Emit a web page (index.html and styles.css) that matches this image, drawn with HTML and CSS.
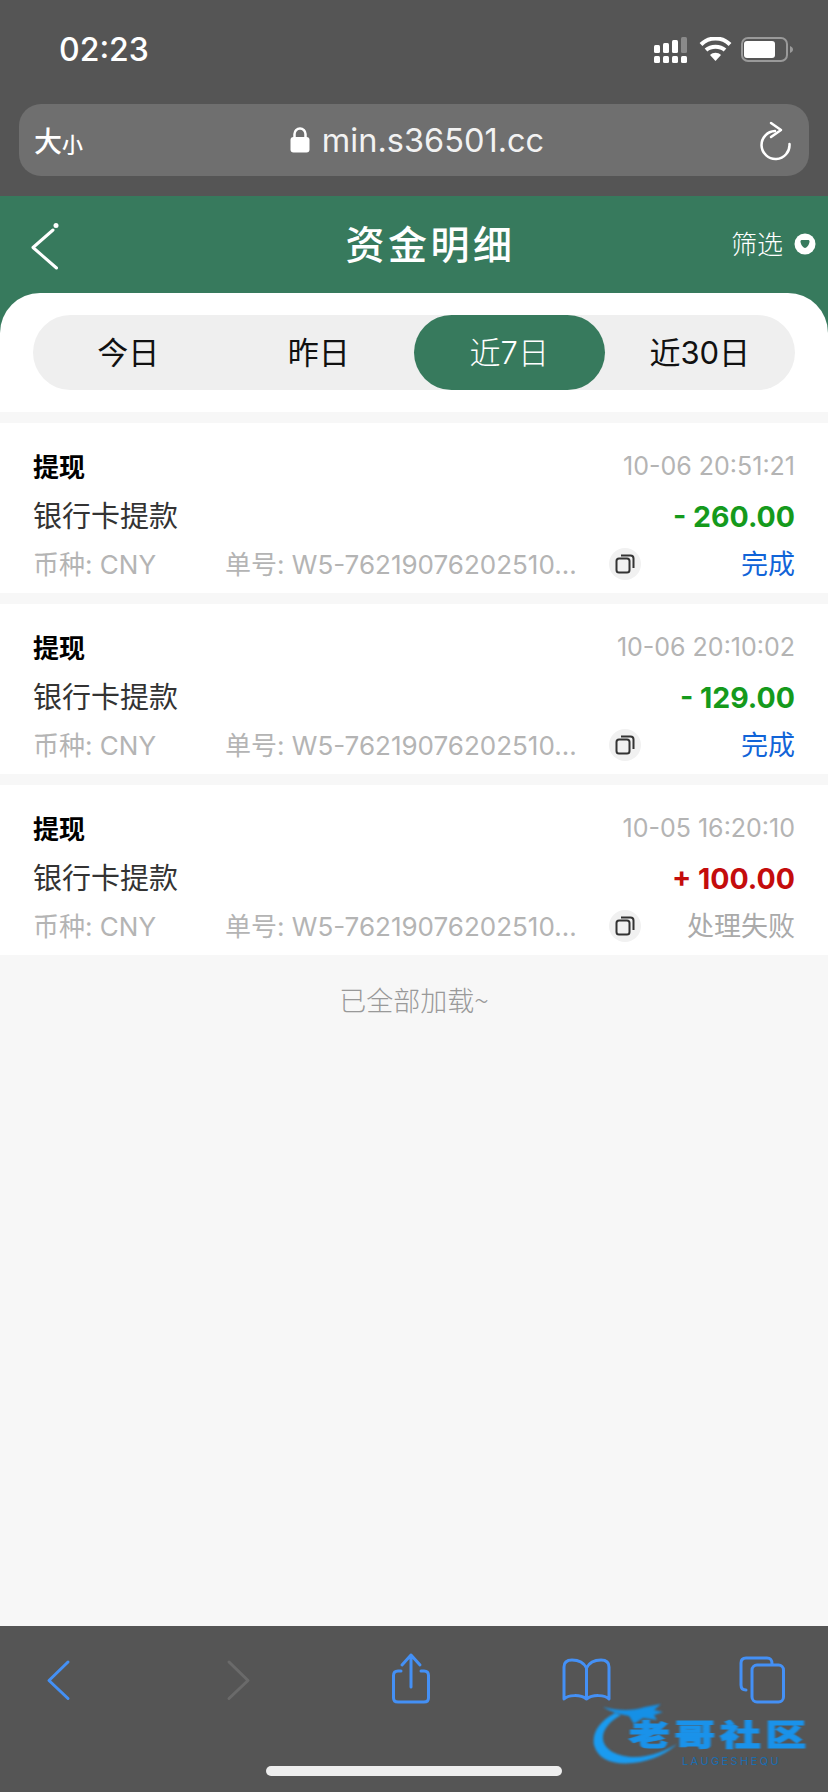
FILE: index.html
```html
<!DOCTYPE html>
<html lang="zh-CN">
<head>
    <meta charset="UTF-8">
    <meta name="viewport" content="width=device-width, initial-scale=1.0">
    <title>资金明细</title>
    <link rel="stylesheet" href="styles.css">
</head>
<body>
    <div class="browser-top">
        <div class="status-bar">
            <span class="clock">02:23</span>
            <svg class="status-icons" width="140" height="26" viewBox="0 0 140 26">
                <!-- signal -->
                <g fill="#fff">
                    <rect x="0" y="8" width="6" height="8" rx="1.5"/>
                    <rect x="9" y="6" width="6" height="10" rx="1.5"/>
                    <rect x="18" y="3" width="6" height="13" rx="1.5"/>
                    <rect x="27" y="0" width="6" height="16" rx="1.5" fill="#8a8a8a"/>
                    <rect x="0" y="19" width="6" height="7" rx="1.5"/>
                    <rect x="9" y="19" width="6" height="7" rx="1.5"/>
                    <rect x="18" y="19" width="6" height="7" rx="1.5"/>
                    <rect x="27" y="19" width="6" height="7" rx="1.5"/>
                </g>
                <!-- wifi -->
                <g fill="none" stroke="#fff" stroke-width="4">
                    <path d="M47 7.500C55 -0.500 68 -0.500 76 7.500"/>
                    <path d="M52 13C57 8.500 66 8.500 71 13"/>
                </g>
                <path d="M56 18C59 15 64 15 67 18L61.500 24Z" fill="#fff"/>
                <!-- battery -->
                <rect x="88" y="1" width="45" height="23" rx="6" fill="none" stroke="#9a9a9a" stroke-width="2"/>
                <rect x="90" y="4" width="31" height="17" rx="3" fill="#fff"/>
                <path d="M136 9C138 10 139 11 139 12.500C139 14 138 15 136 16Z" fill="#9a9a9a"/>
            </svg>
        </div>
        <div class="url-bar">
            <span class="font-size"><span class="big">大</span><span class="small">小</span></span>
            <span class="address">
                <svg width="20" height="26" viewBox="0 0 20 26">
                    <path d="M4.500 11V7a5.500 5.500 0 0 1 11 0v4" fill="none" stroke="#fff" stroke-width="2.500"/>
                    <rect x="0.500" y="10" width="19" height="15.500" rx="3" fill="#fff"/>
                </svg>
                min.s36501.cc
            </span>
            <svg class="reload" width="36" height="42" viewBox="0 0 36 42">
                <path d="M17 11A14 14 0 1 0 31.500 24" fill="none" stroke="#fff" stroke-width="2.500" stroke-linecap="round"/>
                <path d="M13 3L23 10L13 17" fill="none" stroke="#fff" stroke-width="2.500" stroke-linecap="round" stroke-linejoin="round"/>
            </svg>
        </div>
    </div>

    <div class="page-header">
        <svg class="back" width="40" height="50" viewBox="0 0 40 50">
            <path d="M24 9L4 26.500L27.500 47" fill="none" stroke="#fff" stroke-width="3" stroke-linecap="round" stroke-linejoin="round"/>
            <circle cx="27" cy="4.500" r="2.500" fill="#fff"/>
        </svg>
        <h1 class="page-title">资金明细</h1>
        <div class="filter">
            <span>筛选</span>
            <svg width="22" height="22" viewBox="0 0 22 22">
                <circle cx="11" cy="11" r="10.500" fill="#fff"/>
                <path d="M6.500 8.500C6.500 7.500 7 7 8 7H14C15 7 15.500 7.500 15.500 8.500C15.500 11 13 15 11 15C9 15 6.500 11 6.500 8.500Z" fill="#377a5d"/>
            </svg>
        </div>
    </div>

    <div class="tabs-wrap">
        <div class="tabs">
            <div class="tab">今日</div>
            <div class="tab">昨日</div>
            <div class="tab active">近7日</div>
            <div class="tab">近30日</div>
        </div>
    </div>

    <div class="content">
        <div class="record">
            <div class="line">
                <span class="type">提现</span>
                <span class="time">10-06 20:51:21</span>
            </div>
            <div class="line">
                <span class="method">银行卡提款</span>
                <span class="amount minus">- 260.00</span>
            </div>
            <div class="line meta">
                <span class="currency">币种: CNY</span>
                <span class="order">单号: W5-76219076202510...</span>
                <span class="copy">
                    <svg width="20" height="20" viewBox="0 0 20 20">
                        <rect x="1.500" y="4.500" width="13" height="14" rx="2.500" fill="none" stroke="#333" stroke-width="2"/>
                        <path d="M6 1.500H15.500C17.500 1.500 18.500 2.500 18.500 4.500V14" fill="none" stroke="#333" stroke-width="2"/>
                    </svg>
                </span>
                <span class="state done">完成</span>
            </div>
        </div>

        <div class="record">
            <div class="line">
                <span class="type">提现</span>
                <span class="time">10-06 20:10:02</span>
            </div>
            <div class="line">
                <span class="method">银行卡提款</span>
                <span class="amount minus">- 129.00</span>
            </div>
            <div class="line meta">
                <span class="currency">币种: CNY</span>
                <span class="order">单号: W5-76219076202510...</span>
                <span class="copy">
                    <svg width="20" height="20" viewBox="0 0 20 20">
                        <rect x="1.500" y="4.500" width="13" height="14" rx="2.500" fill="none" stroke="#333" stroke-width="2"/>
                        <path d="M6 1.500H15.500C17.500 1.500 18.500 2.500 18.500 4.500V14" fill="none" stroke="#333" stroke-width="2"/>
                    </svg>
                </span>
                <span class="state done">完成</span>
            </div>
        </div>

        <div class="record">
            <div class="line">
                <span class="type">提现</span>
                <span class="time">10-05 16:20:10</span>
            </div>
            <div class="line">
                <span class="method">银行卡提款</span>
                <span class="amount plus">+ 100.00</span>
            </div>
            <div class="line meta">
                <span class="currency">币种: CNY</span>
                <span class="order">单号: W5-76219076202510...</span>
                <span class="copy">
                    <svg width="20" height="20" viewBox="0 0 20 20">
                        <rect x="1.500" y="4.500" width="13" height="14" rx="2.500" fill="none" stroke="#333" stroke-width="2"/>
                        <path d="M6 1.500H15.500C17.500 1.500 18.500 2.500 18.500 4.500V14" fill="none" stroke="#333" stroke-width="2"/>
                    </svg>
                </span>
                <span class="state">处理失败</span>
            </div>
        </div>

        <div class="loaded">已全部加载~</div>
    </div>

    <div class="browser-bottom">
        <div class="toolbar">
            <svg width="60" height="60" viewBox="0 0 60 60" fill="none" stroke="#4490f5" stroke-width="3" stroke-linecap="round" stroke-linejoin="round">
                <path d="M39 11L20 29.500 39 47.500"/>
            </svg>
            <svg width="60" height="60" viewBox="0 0 60 60" fill="none" stroke="#6a6a6a" stroke-width="3" stroke-linecap="round" stroke-linejoin="round">
                <path d="M24 11L43 29.500 24 47.500"/>
            </svg>
            <svg width="60" height="60" viewBox="0 0 60 60" fill="none" stroke="#4490f5" stroke-width="3" stroke-linecap="round" stroke-linejoin="round">
                <path d="M20 20H17C14 20 12.500 21.500 12.500 24.500V47C12.500 50 14 51 17 51H43C46 51 47.500 50 47.500 47V24.500C47.500 21.500 46 20 43 20H40"/>
                <path d="M30 36V4M21 14L30 4L39 14"/>
            </svg>
            <svg width="60" height="60" viewBox="0 0 60 60" fill="none" stroke="#4490f5" stroke-width="3" stroke-linecap="round" stroke-linejoin="round">
                <path d="M30.500 17C27 10 20 9 16 9C11 9 8 11 8 16V48C12 44 24 43 30.500 48C37 43 49 44 53 48V16C53 11 50 9 45 9C41 9 34 10 30.500 17ZM30.500 17V48"/>
            </svg>
            <svg width="60" height="60" viewBox="0 0 60 60" fill="none" stroke="#4490f5" stroke-width="3" stroke-linecap="round" stroke-linejoin="round">
                <path d="M14 39C10 39 9 37 9 34V12C9 8 11 7 14 7H35C39 7 40 9 40 13"/>
                <rect x="20" y="14" width="31.500" height="37" rx="5"/>
            </svg>
        </div>
        <div class="home-bar"></div>
        <!-- watermark -->
        <div class="watermark">
            <svg class="dragon" width="100" height="70" viewBox="0 0 100 70">
                <path d="M26 11C9 20 3 32 5 43C9 58 24 63 44 61C64 59 80 50 88 42C78 48 62 55 46 55C29 55 15 48 14 37C13 28 21 19 32 13Z" fill="#1a9bf0"/>
                <path d="M14 5C30 9 44 9 56 5L72 2L65 8L74 10L65 13L68 18L54 16L45 22L40 14C30 12 22 10 14 5Z" fill="#1590e6"/>
            </svg>
            <div class="wm-name">老哥社区</div>
            <div class="wm-sub">LAUGESHEQU</div>
        </div>
    </div>
</body>
</html>
```

FILE: styles.css
```css
* {
    box-sizing: border-box;
}
html, body {
    margin: 0;
    height: 100%;
}
body {
    width: 828px;
    height: 1792px;
    overflow: hidden;
    display: flex;
    flex-direction: column;
    font-family: Inter, "Noto Sans CJK SC", sans-serif;
    background-color: #f7f7f7;
}

/* safari top */
.browser-top {
    height: 196px;
    padding: 0 19px;
    background-color: #555;
    color: white;
}
.status-bar {
    height: 104px;
    padding: 35px 15px 0 40px;
    display: flex;
    justify-content: space-between;
    align-items: flex-start;
}
.clock {
    font-size: 32px;
    line-height: 30px;
    font-weight: 500;
}
.status-icons {
    margin-top: 2px;
}
.url-bar {
    height: 72px;
    padding: 0 15px 0 15px;
    display: flex;
    align-items: center;
    justify-content: space-between;
    border-radius: 22px;
    background-color: #6f6f6f;
}
.font-size {
    width: 120px;
    font-family: "Noto Sans CJK SC", sans-serif;
    font-weight: 500;
    line-height: 1;
}
.big {
    font-size: 28px;
}
.small {
    font-size: 21px;
}
.address {
    display: flex;
    align-items: center;
    gap: 12px;
    font-size: 32.500px;
    color: #f2f2f2;
}
.reload {
    margin-left: 78px;
    margin-top: 2px;
}

/* green header */
.page-header {
    height: 137px;
    padding: 0 12px 40px 29px;
    display: grid;
    grid-template-columns: 200px 1fr 200px;
    align-items: center;
    background-color: #377a5d;
    color: white;
}
.back {
    margin-top: 3px;
}
.page-title {
    margin: -6px 0 0 16px;
    text-align: center;
    font-family: "Noto Sans CJK SC", sans-serif;
    font-size: 39px;
    font-weight: 500;
    letter-spacing: 3.500px;
}
.filter {
    display: flex;
    justify-content: flex-end;
    align-items: center;
    gap: 11px;
    font-family: "Noto Sans CJK SC", sans-serif;
    font-size: 26px;
    font-weight: 300;
    margin-top: -4px;
}
.filter svg {
    margin-top: 2px;
}

/* tabs */
.tabs-wrap {
    margin-top: -40px;
    padding: 22px 33px;
    background-color: white;
    border-radius: 40px 40px 0 0;
}
.tabs {
    height: 75px;
    display: flex;
    border-radius: 38px;
    background-color: #efefef;
}
.tab {
    flex: 1;
    display: flex;
    align-items: center;
    justify-content: center;
    padding-bottom: 5px;
    border-radius: 38px;
    font-family: Inter, "Noto Sans CJK SC", sans-serif;
    font-size: 31px;
    color: #111;
}
.tab.active {
    background-color: #377a5d;
    color: white;
    font-weight: 300;
}

/* list */
.content {
    flex: 1;
    padding-top: 11px;
}
.record {
    height: 170px;
    margin-bottom: 11px;
    padding: 21px 33px 5px;
    background-color: white;
}
.record:last-of-type {
    margin-bottom: 0;
}
.line {
    height: 48px;
    display: flex;
    align-items: center;
    justify-content: space-between;
}
.type {
    margin-bottom: 5px;
    font-family: "Noto Sans CJK SC", sans-serif;
    font-size: 26px;
    font-weight: 700;
    color: #000;
}
.time {
    margin-bottom: 4px;
    font-size: 25px;
    color: #b4b4b4;
}
.method {
    margin-bottom: 4px;
    font-family: "Noto Sans CJK SC", sans-serif;
    font-size: 29px;
    color: #333;
}
.amount {
    font-size: 28.500px;
    font-weight: 700;
}
.minus {
    color: #159a1c;
}
.plus {
    color: #c40c0c;
}
.meta {
    justify-content: flex-start;
    padding-bottom: 4px;
    font-size: 26px;
    color: #b4b4b4;
}
.currency {
    width: 191px;
}
.order {
    width: 385px;
    padding-left: 1px;
}
.copy {
    width: 32px;
    height: 32px;
    margin-top: 4px;
    display: flex;
    align-items: center;
    justify-content: center;
    border-radius: 50%;
    background-color: #f1f1f1;
}
.state {
    margin-left: auto;
    font-family: "Noto Sans CJK SC", sans-serif;
    font-size: 27px;
    color: #aaa;
}
.state.done {
    color: #1164d8;
}
.loaded {
    padding-top: 14px;
    text-align: center;
    font-family: "Noto Sans CJK SC", sans-serif;
    font-size: 27px;
    font-weight: 300;
    color: #999;
}

/* safari bottom */
.browser-bottom {
    position: relative;
    height: 166px;
    padding: 25px 36px 0 29px;
    background-color: #555;
}
.toolbar {
    display: flex;
    justify-content: space-between;
}
.home-bar {
    width: 296px;
    height: 10px;
    margin: 55px 0 0 237px;
    border-radius: 5px;
    background-color: #eee;
}
.watermark {
    position: absolute;
    left: 589px;
    top: 76px;
    width: 230px;
    height: 70px;
}
.dragon {
    position: absolute;
    left: 0;
    top: 0;
    filter: blur(0.8px);
}
.wm-name {
    position: absolute;
    left: 40px;
    top: 15px;
    font-family: "Noto Sans CJK SC", sans-serif;
    font-size: 29px;
    line-height: 32px;
    font-weight: 900;
    letter-spacing: 3.500px;
    white-space: nowrap;
    transform: scaleX(1.4);
    transform-origin: left top;
    color: #1a92ea;
    -webkit-text-stroke: 1px #1a92ea;
    filter: blur(0.7px);
}
.wm-sub {
    position: absolute;
    left: 93px;
    top: 53px;
    font-size: 11px;
    line-height: 13px;
    letter-spacing: 2.400px;
    color: #1c6cae;
}
```
